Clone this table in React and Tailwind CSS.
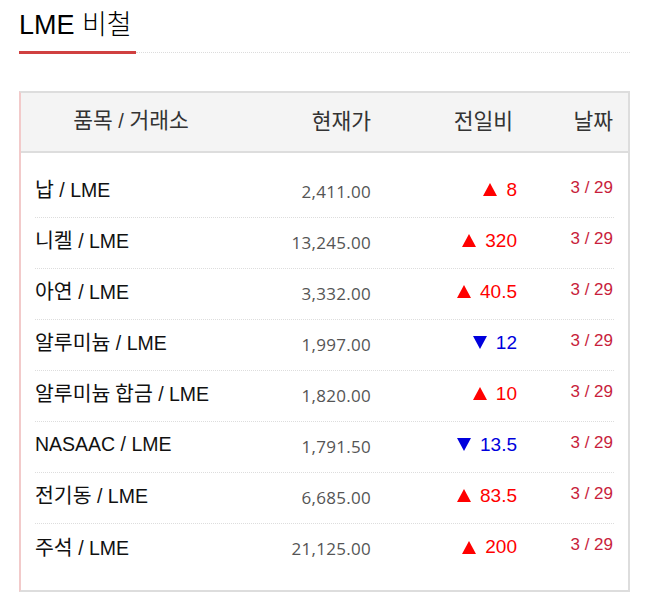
import React from "react";

const rows = [
  { ko: "납", price: "2,411.00", dir: "up", chg: "8" },
  { ko: "니켈", price: "13,245.00", dir: "up", chg: "320" },
  { ko: "아연", price: "3,332.00", dir: "up", chg: "40.5" },
  { ko: "알루미늄", price: "1,997.00", dir: "down", chg: "12" },
  { ko: "알루미늄 합금", price: "1,820.00", dir: "up", chg: "10" },
  { en: "NASAAC", price: "1,791.50", dir: "down", chg: "13.5" },
  { ko: "전기동", price: "6,685.00", dir: "up", chg: "83.5" },
  { ko: "주석", price: "21,125.00", dir: "up", chg: "200" },
];

const KO = { fontFamily: '"Noto Sans CJK KR", sans-serif' };
const LAT = { fontFamily: '"Liberation Sans", sans-serif' };

function Tri({ dir }) {
  return dir === "up" ? (
    <svg width="14" height="13" viewBox="0 0 14 13" className="shrink-0">
      <polygon points="7,0 14,13 0,13" fill="#ff0000" />
    </svg>
  ) : (
    <svg width="14" height="13" viewBox="0 0 14 13" className="shrink-0">
      <polygon points="0,0 14,0 7,13" fill="#0000dd" />
    </svg>
  );
}

export default function App() {
  return (
    <div className="w-[654px] h-[611px] bg-white">
      <div className="ml-[19px] w-[611px]">
        <div className="pt-[9px] text-[27px] leading-[27px] text-black" style={LAT}>
          LME <span className="font-light" style={KO}>비철</span>
        </div>
        <div className="mt-[12px] flex items-center h-[3px]">
          <div className="w-[117px] h-[3px] bg-[#d04040]" />
          <div className="flex-1 border-t border-dotted border-[#dcdcdc]" />
        </div>

        <div className="mt-[37px] border-2 border-[#dddddd] border-l-[#f2caca]">
          <div
            className="h-[60px] bg-[#f4f4f4] border-b-2 border-[#dddddd] px-[14px] grid grid-cols-[194px_142px_146px_96px] items-center text-[21.5px] leading-[24px] text-[#333]"
            style={KO}
          >
            <div className="text-center pr-[2px] -mt-[4px]">
              품목<span className="text-[20px]" style={LAT}> / </span>거래소
            </div>
            <div className="text-right -mt-[4px]">현재가</div>
            <div className="text-right pr-[4px] -mt-[4px]">전일비</div>
            <div className="text-right -mt-[4px]">날짜</div>
          </div>

          <div className="px-[14px] pt-[14px] pb-[15px]">
            {rows.map((r, i) => (
              <div
                key={i}
                className={
                  "h-[51px] grid grid-cols-[194px_142px_146px_96px] items-center " +
                  (i < rows.length - 1 ? "border-b border-dotted border-[#dddddd]" : "")
                }
              >
                <div className="text-[19.5px] leading-[22px] text-[#111] -mt-[6px] whitespace-nowrap" style={LAT}>
                  {r.ko ? (
                    <span className="text-[20.5px]" style={KO}>
                      {r.ko}
                    </span>
                  ) : (
                    r.en
                  )}
                  {" / LME"}
                </div>
                <div
                  className="text-right text-[17px] leading-[22px] text-[#555] -mt-[1px] tracking-[0.3px]"
                  style={{ fontFamily: '"Open Sans", sans-serif' }}
                >
                  {r.price}
                </div>
                <div
                  className={
                    "flex items-center justify-end gap-[9px] text-[19px] leading-[22px] -mt-[5px] " +
                    (r.dir === "up" ? "text-[#ff0000]" : "text-[#0000dd]")
                  }
                  style={LAT}
                >
                  <Tri dir={r.dir} />
                  <span>{r.chg}</span>
                </div>
                <div className="text-right text-[17px] leading-[22px] text-[#c81e3c] -mt-[9px]" style={LAT}>
                  3 / 29
                </div>
              </div>
            ))}
          </div>
        </div>
      </div>
    </div>
  );
}
